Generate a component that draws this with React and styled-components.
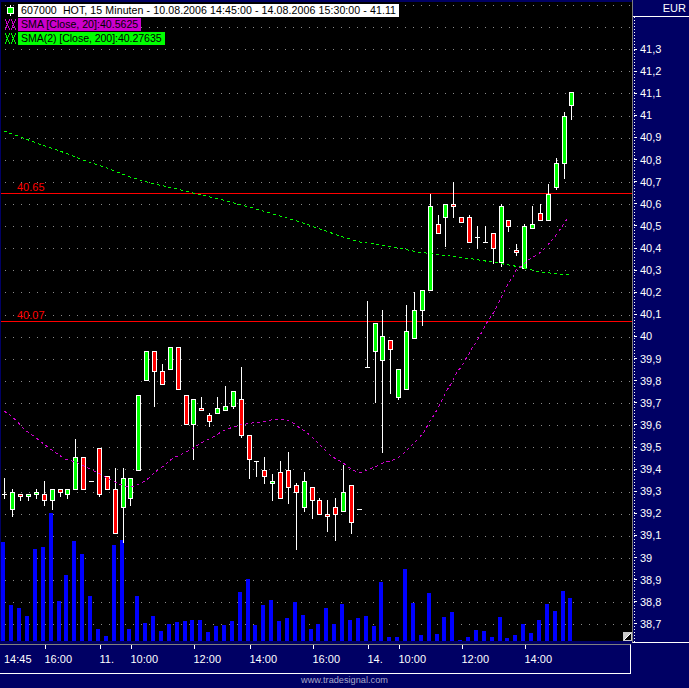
import React from 'react'
import styled, { createGlobalStyle } from 'styled-components'

const NAVY = '#000064'
const GREY = '#7f7f7f'

// col, high, bodyTop, bodyBottom, low, colour. 'd' is a dash (open = close)
const CANDLES = [
  [4, 478, 494, 494, 499, 'd'], [12, 489, 492, 510, 517, 'g'], [20, 494, 494, 497, 501, 'r'],
  [28, 494, 494, 497, 501, 'g'], [36, 489, 492, 495, 499, 'g'], [44, 481, 494, 501, 506, 'r'],
  [52, 489, 489, 501, 510, 'g'], [60, 489, 489, 493, 497, 'r'], [67, 489, 489, 495, 499, 'g'],
  [75, 439, 457, 490, 490, 'g'], [83, 457, 457, 490, 490, 'r'], [91, 481, 481, 481, 481, 'd'],
  [99, 448, 448, 495, 497, 'r'], [107, 476, 476, 490, 490, 'r'], [115, 468, 489, 534, 534, 'r'],
  [123, 468, 478, 508, 543, 'g'], [130, 478, 478, 499, 506, 'g'], [138, 395, 395, 471, 471, 'g'],
  [146, 351, 351, 381, 381, 'g'], [154, 351, 351, 372, 407, 'r'], [162, 364, 371, 385, 385, 'r'],
  [170, 347, 347, 370, 370, 'g'], [178, 347, 347, 390, 390, 'r'], [186, 395, 395, 425, 425, 'r'],
  [193, 399, 399, 425, 460, 'g'], [201, 397, 408, 411, 411, 'r'], [209, 413, 415, 422, 427, 'r'],
  [217, 397, 408, 414, 414, 'g'], [225, 386, 406, 411, 411, 'g'], [233, 391, 391, 407, 409, 'g'],
  [241, 367, 399, 436, 438, 'r'], [249, 435, 435, 460, 479, 'r'], [256, 461, 461, 461, 477, 'd'],
  [264, 457, 470, 477, 484, 'r'], [272, 474, 481, 484, 501, 'g'], [280, 461, 472, 499, 499, 'r'],
  [288, 452, 470, 488, 504, 'r'], [296, 483, 485, 493, 550, 'r'], [304, 472, 481, 508, 512, 'g'],
  [312, 487, 487, 501, 519, 'r'], [319, 498, 500, 515, 515, 'r'], [327, 500, 514, 517, 532, 'r'],
  [335, 498, 507, 515, 541, 'r'], [343, 465, 492, 512, 512, 'g'], [351, 485, 485, 523, 534, 'r'],
  [359, 509, 509, 509, 509, 'd'], [367, 301, 367, 367, 367, 'd'], [375, 323, 323, 352, 403, 'g'],
  [382, 310, 336, 361, 453, 'g'], [390, 340, 340, 350, 394, 'r'], [398, 369, 369, 398, 400, 'g'],
  [406, 305, 331, 390, 390, 'g'], [414, 292, 310, 339, 339, 'g'], [422, 290, 290, 311, 326, 'g'],
  [430, 194, 206, 291, 291, 'g'], [438, 215, 224, 234, 234, 'r'], [445, 204, 204, 218, 247, 'g'],
  [453, 182, 204, 207, 218, 'r'], [461, 217, 217, 223, 223, 'r'], [469, 215, 217, 243, 243, 'r'],
  [477, 226, 237, 237, 249, 'd'], [485, 226, 242, 242, 242, 'd'], [493, 233, 233, 249, 264, 'r'],
  [501, 204, 206, 263, 267, 'g'], [508, 220, 220, 227, 232, 'r'], [516, 244, 250, 253, 256, 'r'],
  [524, 224, 226, 269, 269, 'g'], [532, 206, 224, 229, 229, 'g'], [540, 204, 213, 221, 221, 'r'],
  [548, 184, 194, 221, 221, 'g'], [556, 158, 163, 188, 190, 'g'], [564, 112, 116, 164, 179, 'g'],
  [571, 92, 92, 106, 120, 'g'],
]

const VOLUME_TOPS = [
  542, 605, 608, 616, 549, 547, 513, 601, 575, 541, 554, 596, 629, 636, 545, 540, 629, 596, 623, 616,
  631, 624, 622, 621, 620, 620, 632, 626, 625, 621, 592, 579, 625, 605, 600, 621, 618, 602, 615, 629,
  624, 608, 624, 604, 620, 618, 616, 626, 582, 637, 637, 569, 603, 635, 593, 634, 617, 612, 640, 637,
  630, 631, 637, 617, 638, 635, 624, 633, 620, 604, 611, 591, 598,
]

const SMA_20 = '4,411 10,415 17,421 23,428 29,433 35,437 41,442 48,447 53,451 59,455 65,459 72,461 78,463 84,466 90,469 96,472 102,475 107,478 113,481 119,484 125,486 132,487 137,485 143,482 149,478 155,472 161,468 167,463 173,458 180,455 186,452 192,449 198,445 203,442 209,439 215,436 221,432 228,429 233,427 240,425 252,423 263,422 275,419 287,420 293,423 300,428 306,432 312,437 317,442 324,449 330,455 336,459 342,462 347,466 353,470 359,473 365,471 372,468 377,466 383,463 390,461 396,459 402,455 407,450 413,444 419,438 424,432 430,421 434,415 438,408 441,402 444,396 447,390 451,384 454,378 457,372 462,366 465,360 469,354 472,348 476,343 479,337 483,330 486,324 490,318 494,312 497,306 500,300 503,294 506,288 509,282 513,277 516,270 522,266 528,260 535,256 541,252 547,246 552,240 557,234 561,228 565,222 569,216'
const SMA_200 = '4,131 23,138 42,145 60,151 83,160 107,168 130,177 150,183 173,188 197,194 227,201 260,210 300,222 340,236 360,242 388,246 418,252 450,256 473,259 498,263 520,267 540,272 570,275'

const PRICES = [
  '41,3', '41,2', '41,1', '41', '40,9', '40,8', '40,7', '40,6', '40,5', '40,4', '40,3', '40,2', '40,1', '40',
  '39,9', '39,8', '39,7', '39,6', '39,5', '39,4', '39,3', '39,2', '39,1', '39', '38,9', '38,8', '38,7',
]

// label and distance to the next tick
const TIMES = [
  { label: '14:45', width: 40.5, tick: false }, { label: '16:00', width: 55 }, { label: '11.', width: 31 },
  { label: '10:00', width: 63 }, { label: '12:00', width: 56 }, { label: '14:00', width: 63 },
  { label: '16:00', width: 55 }, { label: '14.', width: 31 }, { label: '10:00', width: 63 },
  { label: '12:00', width: 63 }, { label: '14:00', width: 60 },
]

const GRID_ROWS = Array.from({ length: 29 }, (_, i) => Math.round(5 + i * 22.115))

const GlobalStyle = createGlobalStyle`
  html, body {
    margin: 0;
    background: ${NAVY};
  }
`

const Page = styled.div`
  width: 689px;
  height: 688px;
  overflow: hidden;
  display: flex;
  flex-direction: column;
  background: ${NAVY};
  font-family: "Liberation Sans", Arial, sans-serif;
  font-size: 11px;
  color: #fff;
`

const TopRow = styled.div`
  display: flex;
  height: 644px;
`

const ChartPane = styled.div`
  position: relative;
  width: 631px;
  height: 639px;
  margin: 2px 0 0 1px;
  background: #000;
`

const ChartSvg = styled.svg`
  display: block;
  shape-rendering: crispEdges;
`

const LevelText = styled.text`
  fill: #ff0000;
  font-size: 11px;
`

const Legend = styled.div`
  position: absolute;
  top: 2px;
  left: 3px;
  display: flex;
  flex-direction: column;
  gap: 1px;
`

const LegendRow = styled.div`
  display: flex;
  align-items: center;
  height: 13px;
`

const LegendMark = styled.svg`
  flex: none;
  display: block;
  width: 14px;
  height: 13px;
  shape-rendering: crispEdges;
`

const LegendLabel = styled.span`
  height: 13px;
  line-height: 13px;
  padding: 0 3px;
  color: #000;
  white-space: pre;
  font-size: 10.6px;
  letter-spacing: ${(p) => p.$spacing || 0}px;
  background: ${(p) => p.$bg};
`

const Resize = styled.svg`
  position: absolute;
  right: 0;
  bottom: 0;
  display: block;
  shape-rendering: crispEdges;
`

const PriceAxis = styled.div`
  flex: 1;
  height: 642px;
  border-left: 1px solid ${GREY};
  border-bottom: 1px solid #fff;
`

const Currency = styled.div`
  height: 16px;
  line-height: 17px;
  padding-right: 3px;
  text-align: right;
  font-size: 11px;
  border-bottom: 1px solid #fff;
`

const PriceScale = styled.div`
  margin-left: 1px;
  height: 625px;
  padding-top: 21px;
  box-sizing: border-box;
  background: repeating-linear-gradient(to bottom, #fff 0 1px, transparent 1px 3px) no-repeat 0 0 / 1px 100%;
`

const PriceRow = styled.div`
  display: flex;
  align-items: center;
  height: 22.115px;
  font-size: 11px;
  &::before {
    content: '';
    width: 3px;
    height: 1px;
    margin-right: 3px;
    background: #fff;
  }
`

const TimeAxis = styled.div`
  display: flex;
  width: 631px;
  height: 30px;
  padding-left: 4px;
  box-sizing: border-box;
  border-top: 1px solid ${GREY};
  border-right: 1px solid #fff;
  border-bottom: 1px solid #fff;
  line-height: 28px;
  font-size: 11px;
`

const TimeCell = styled.div`
  position: relative;
  flex: none;
  width: ${(p) => p.$width}px;
  &::before {
    content: '';
    display: ${(p) => (p.$tick ? 'block' : 'none')};
    position: absolute;
    top: 0;
    left: 0;
    width: 1px;
    height: 4px;
    background: #fff;
  }
`

const Footer = styled.div`
  height: 12px;
  line-height: 13px;
  text-align: center;
  font-size: 9.2px;
  color: #a9a9c8;
`

const COLOURS = { g: '#00ff00', r: '#ff0000' }

const Candle = ({ col, high, top, bottom, low, kind }) => {
  const isDash = kind === 'd'
  return (
    <g>
      {low > high && <rect x={col} y={high} width="1" height={low - high} fill="#fff" />}
      {isDash && <rect x={col - 2} y={top} width="5" height="1" fill="#fff" />}
      {!isDash && (
        <>
          <rect x={col - 2} y={top} width="5" height={bottom - top} fill="#fff" />
          <rect x={col - 1} y={top + 1} width="3" height={Math.max(bottom - top - 2, 1)} fill={COLOURS[kind]} />
        </>
      )}
    </g>
  )
}

const CandleMark = () => (
  <LegendMark viewBox="0 0 14 13">
    <rect x="6" y="1" width="1" height="11" fill="#fff" />
    <rect x="3" y="3" width="7" height="7" fill="#fff" />
    <rect x="4" y="4" width="5" height="5" fill="#00ff00" />
  </LegendMark>
)

const CrossMark = ({ color }) => (
  <LegendMark viewBox="0 0 14 13">
    <path d="M1 1 L6 12 M6 1 L1 12 M7 1 L12 12 M12 1 L7 12" stroke={color} strokeWidth="1" fill="none" />
  </LegendMark>
)

const Chart = () => (
  <ChartSvg width="631" height="639" viewBox="1 2 631 639">
    {GRID_ROWS.map((y) => (
      <line key={y} x1="5" x2="632" y1={y + 0.5} y2={y + 0.5} stroke="#8a8a8a" strokeDasharray="1 7" />
    ))}
    <rect x="1" y="193" width="631" height="1" fill="#ff0000" />
    <rect x="1" y="321" width="631" height="1" fill="#ff0000" />
    <LevelText x="17" y="191">40.65</LevelText>
    <LevelText x="17" y="319">40.07</LevelText>
    {VOLUME_TOPS.map((top, i) => (
      <rect key={i} x={CANDLES[i][0] - 3} y={top} width="4" height={641 - top} fill="#0000ff" />
    ))}
    {CANDLES.map(([col, high, top, bottom, low, kind]) => (
      <Candle key={col} col={col} high={high} top={top} bottom={bottom} low={low} kind={kind} />
    ))}
    <polyline points={SMA_200} fill="none" stroke="#00ff00" strokeDasharray="3 3" />
    <polyline points={SMA_20} fill="none" stroke="#cc00cc" strokeDasharray="3 3" />
  </ChartSvg>
)

export default function App() {
  return (
    <Page>
      <GlobalStyle />
      <TopRow>
        <ChartPane>
          <Chart />
          <Legend>
            <LegendRow>
              <CandleMark />
              <LegendLabel $bg="#fff" $spacing={0.08}>607000  HOT, 15 Minuten - 10.08.2006 14:45:00 - 14.08.2006 15:30:00 - 41.11</LegendLabel>
            </LegendRow>
            <LegendRow>
              <CrossMark color="#cc00cc" />
              <LegendLabel $bg="#cc00cc">SMA [Close, 20]:40.5625</LegendLabel>
            </LegendRow>
            <LegendRow>
              <CrossMark color="#00ff00" />
              <LegendLabel $bg="#00ff00" $spacing={-0.07}>SMA(2) [Close, 200]:40.27635</LegendLabel>
            </LegendRow>
          </Legend>
          <Resize width="9" height="9" viewBox="0 0 9 9">
            <rect width="9" height="9" fill="#c8c8c8" />
            <path d="M8 1 L8 8 L1 8 Z" fill="#000" />
            <path d="M1 8 L8 1" stroke="#fff" strokeWidth="1" />
          </Resize>
        </ChartPane>
        <PriceAxis>
          <Currency>EUR</Currency>
          <PriceScale>
            {PRICES.map((price) => (
              <PriceRow key={price}>{price}</PriceRow>
            ))}
          </PriceScale>
        </PriceAxis>
      </TopRow>
      <TimeAxis>
        {TIMES.map(({ label, width, tick = true }, i) => (
          <TimeCell key={i} $width={width} $tick={tick}>{label}</TimeCell>
        ))}
      </TimeAxis>
      <Footer>www.tradesignal.com</Footer>
    </Page>
  )
}
